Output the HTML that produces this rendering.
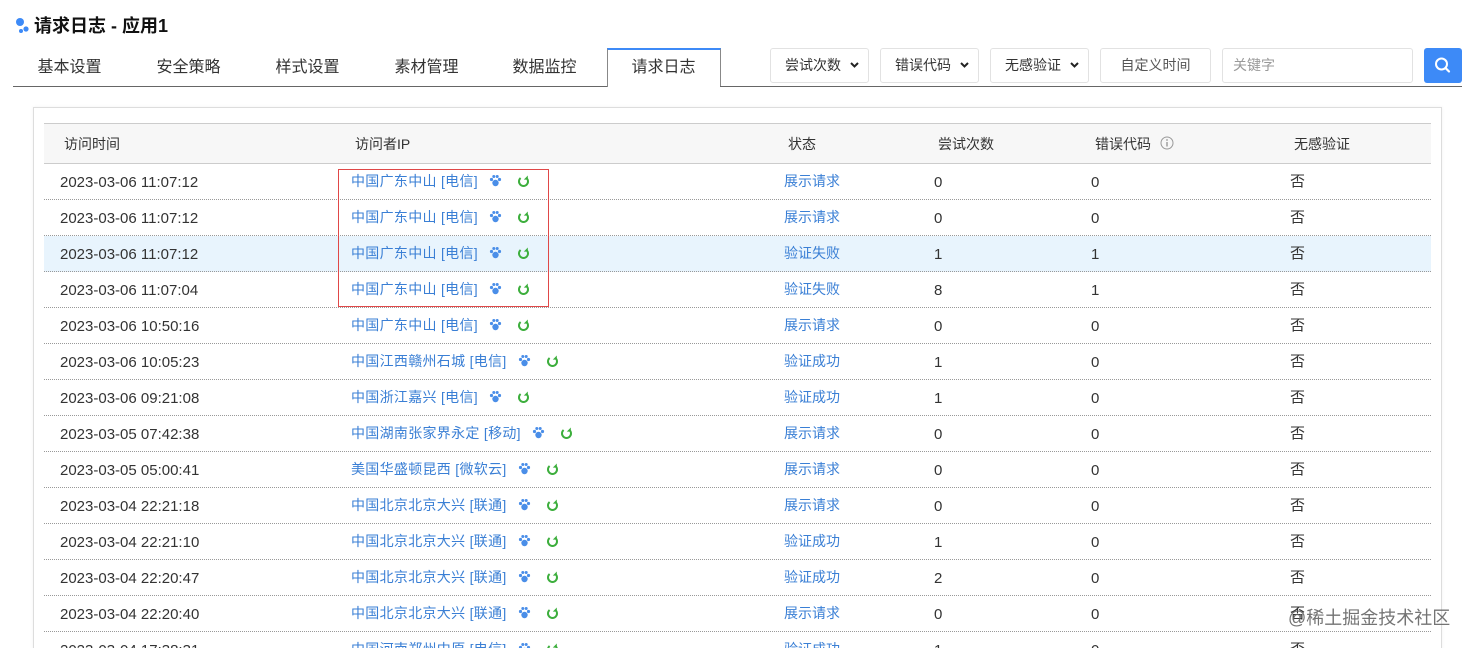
<!DOCTYPE html>
<html><head><meta charset="utf-8">
<style>
*{margin:0;padding:0;box-sizing:border-box}
html,body{width:1473px;height:648px;overflow:hidden}
body{background:#fff;font-family:"Liberation Sans","Noto Sans CJK SC",sans-serif;color:#333;position:relative;font-size:14px}
.abs{position:absolute}
.title{left:34px;top:14px;font-size:18px;font-weight:bold;color:#111;line-height:24px}
.tabline{left:13px;top:86px;width:1449px;height:1px;background:#666}
.tab{top:57px;font-size:16px;color:#333;line-height:22px;width:119px;text-align:center}
.atab{left:607px;top:48px;width:114px;height:39px;border:1px solid #888;border-top:2px solid #3d8af7;border-bottom:none;background:#fff}
.box{top:48px;height:35px;border:1px solid #e2e2e2;border-radius:3px;font-size:14px;line-height:33px;color:#333;background:#fff}
.sbtn{left:1424px;top:48px;width:38px;height:35px;background:#3d8af7;border-radius:3px}
.card{left:33px;top:107px;width:1409px;height:560px;border:1px solid #ddd;box-shadow:0 0 3px rgba(0,0,0,.06)}
.thead{left:44px;top:123px;width:1387px;height:41px;background:#f7f7f7;border-top:1px solid #ccc;border-bottom:1px solid #ccc}
.th{top:134px;font-size:14px;color:#333;line-height:20px}
.row{left:44px;width:1387px;height:36px;border-bottom:1px dotted #999}
.c{font-size:15px;line-height:20px}
.link{color:#3a7fd5;font-size:14px}
.red{left:338px;top:169px;width:211px;height:138px;border:1px solid #e04848}
.wm{left:1288px;top:606px;font-size:18px;color:#666;line-height:24px;opacity:.9}
.chev{position:absolute;right:9px;top:12px}
</style></head><body>
<svg class="abs" style="left:14px;top:16px" width="16" height="18"><circle cx="6" cy="6" r="4" fill="#3d8af7"/><circle cx="12" cy="13" r="2.6" fill="#3d8af7"/><circle cx="7" cy="15" r="2" fill="#3d8af7"/></svg>
<div class="abs title">请求日志 - 应用1</div>
<div class="abs atab"></div>
<div class="abs tabline" style="width:594px"></div>
<div class="abs tabline" style="left:720px;width:742px"></div>
<div class="abs tab" style="left:10px">基本设置</div>
<div class="abs tab" style="left:129px">安全策略</div>
<div class="abs tab" style="left:248px">样式设置</div>
<div class="abs tab" style="left:367px">素材管理</div>
<div class="abs tab" style="left:485px">数据监控</div>
<div class="abs tab" style="left:604px">请求日志</div>

<div class="abs box" style="left:770px;width:99px;padding-left:14px">尝试次数<svg class="chev" width="9" height="8"><path d="M1 2 L4.5 5.5 L8 2" fill="none" stroke="#222" stroke-width="2"/></svg></div>
<div class="abs box" style="left:880px;width:99px;padding-left:14px">错误代码<svg class="chev" width="9" height="8"><path d="M1 2 L4.5 5.5 L8 2" fill="none" stroke="#222" stroke-width="2"/></svg></div>
<div class="abs box" style="left:990px;width:99px;padding-left:14px">无感验证<svg class="chev" width="9" height="8"><path d="M1 2 L4.5 5.5 L8 2" fill="none" stroke="#222" stroke-width="2"/></svg></div>
<div class="abs box" style="left:1100px;width:111px;text-align:center;color:#555">自定义时间</div>
<div class="abs box" style="left:1222px;width:191px;padding-left:10px;color:#999">关键字</div>
<div class="abs sbtn"><svg width="38" height="35"><circle cx="17.5" cy="16" r="5.5" fill="none" stroke="#fff" stroke-width="2"/><line x1="21.5" y1="20" x2="25" y2="23.5" stroke="#fff" stroke-width="2.2" stroke-linecap="round"/></svg></div>

<div class="abs card"></div>
<div class="abs thead"></div>
<div class="abs th" style="left:64px">访问时间</div>
<div class="abs th" style="left:355px">访问者IP</div>
<div class="abs th" style="left:788px">状态</div>
<div class="abs th" style="left:938px">尝试次数</div>
<div class="abs th" style="left:1095px">错误代码</div>
<svg class="abs" style="left:1160px;top:136px" width="14" height="14"><circle cx="7" cy="7" r="6" fill="none" stroke="#999"/><rect x="6.3" y="6" width="1.4" height="4.5" fill="#999"/><circle cx="7" cy="4" r=".9" fill="#999"/></svg>
<div class="abs th" style="left:1294px">无感验证</div>

<div id="rows"></div>
<div class="abs red"></div>
<div class="abs wm">@稀土掘金技术社区</div>

<script>
var d=[
["2023-03-06 11:07:12","中国广东中山 [电信]","展示请求","0","0"],
["2023-03-06 11:07:12","中国广东中山 [电信]","展示请求","0","0"],
["2023-03-06 11:07:12","中国广东中山 [电信]","验证失败","1","1"],
["2023-03-06 11:07:04","中国广东中山 [电信]","验证失败","8","1"],
["2023-03-06 10:50:16","中国广东中山 [电信]","展示请求","0","0"],
["2023-03-06 10:05:23","中国江西赣州石城 [电信]","验证成功","1","0"],
["2023-03-06 09:21:08","中国浙江嘉兴 [电信]","验证成功","1","0"],
["2023-03-05 07:42:38","中国湖南张家界永定 [移动]","展示请求","0","0"],
["2023-03-05 05:00:41","美国华盛顿昆西 [微软云]","展示请求","0","0"],
["2023-03-04 22:21:18","中国北京北京大兴 [联通]","展示请求","0","0"],
["2023-03-04 22:21:10","中国北京北京大兴 [联通]","验证成功","1","0"],
["2023-03-04 22:20:47","中国北京北京大兴 [联通]","验证成功","2","0"],
["2023-03-04 22:20:40","中国北京北京大兴 [联通]","展示请求","0","0"],
["2023-03-04 17:38:31","中国河南郑州中原 [电信]","验证成功","1","0"]];
var paw='<svg width="13" height="13" style="vertical-align:-1px;margin-left:11px"><g fill="#4a8ee8"><circle cx="6.5" cy="9" r="3.2"/><circle cx="2.5" cy="5.5" r="1.6"/><circle cx="10.5" cy="5.5" r="1.6"/><circle cx="4.8" cy="2.5" r="1.5"/><circle cx="8.2" cy="2.5" r="1.5"/></g></svg>';
var ref='<svg width="13" height="13" style="vertical-align:-1px;margin-left:15px"><path d="M3.6 4 A4.5 4.5 0 1 0 9.4 4" fill="none" stroke="#3cae3c" stroke-width="2"/><path d="M10.8 1.5 L10.8 5.6 L6.8 5.6 Z" fill="#3cae3c"/></svg>';
var h='';
d.forEach(function(r,i){var top=164+i*36;var bg=i==2?'background:#e8f4fd;':'';
h+='<div class="abs row" style="top:'+top+'px;'+bg+'"></div>';
var ty=top+8;
h+='<div class="abs c" style="left:60px;top:'+(ty+1)+'px">'+r[0]+'</div>';
h+='<div class="abs c link" style="left:351px;top:'+(ty-1)+'px;letter-spacing:.3px">'+r[1]+paw+ref+'</div>';
h+='<div class="abs c link" style="left:784px;top:'+(ty-1)+'px">'+r[2]+'</div>';
h+='<div class="abs c" style="left:934px;top:'+(ty+1)+'px">'+r[3]+'</div>';
h+='<div class="abs c" style="left:1091px;top:'+(ty+1)+'px">'+r[4]+'</div>';
h+='<div class="abs c" style="left:1290px;top:'+ty+'px">否</div>';});
document.getElementById('rows').innerHTML=h;
</script>
</body></html>
